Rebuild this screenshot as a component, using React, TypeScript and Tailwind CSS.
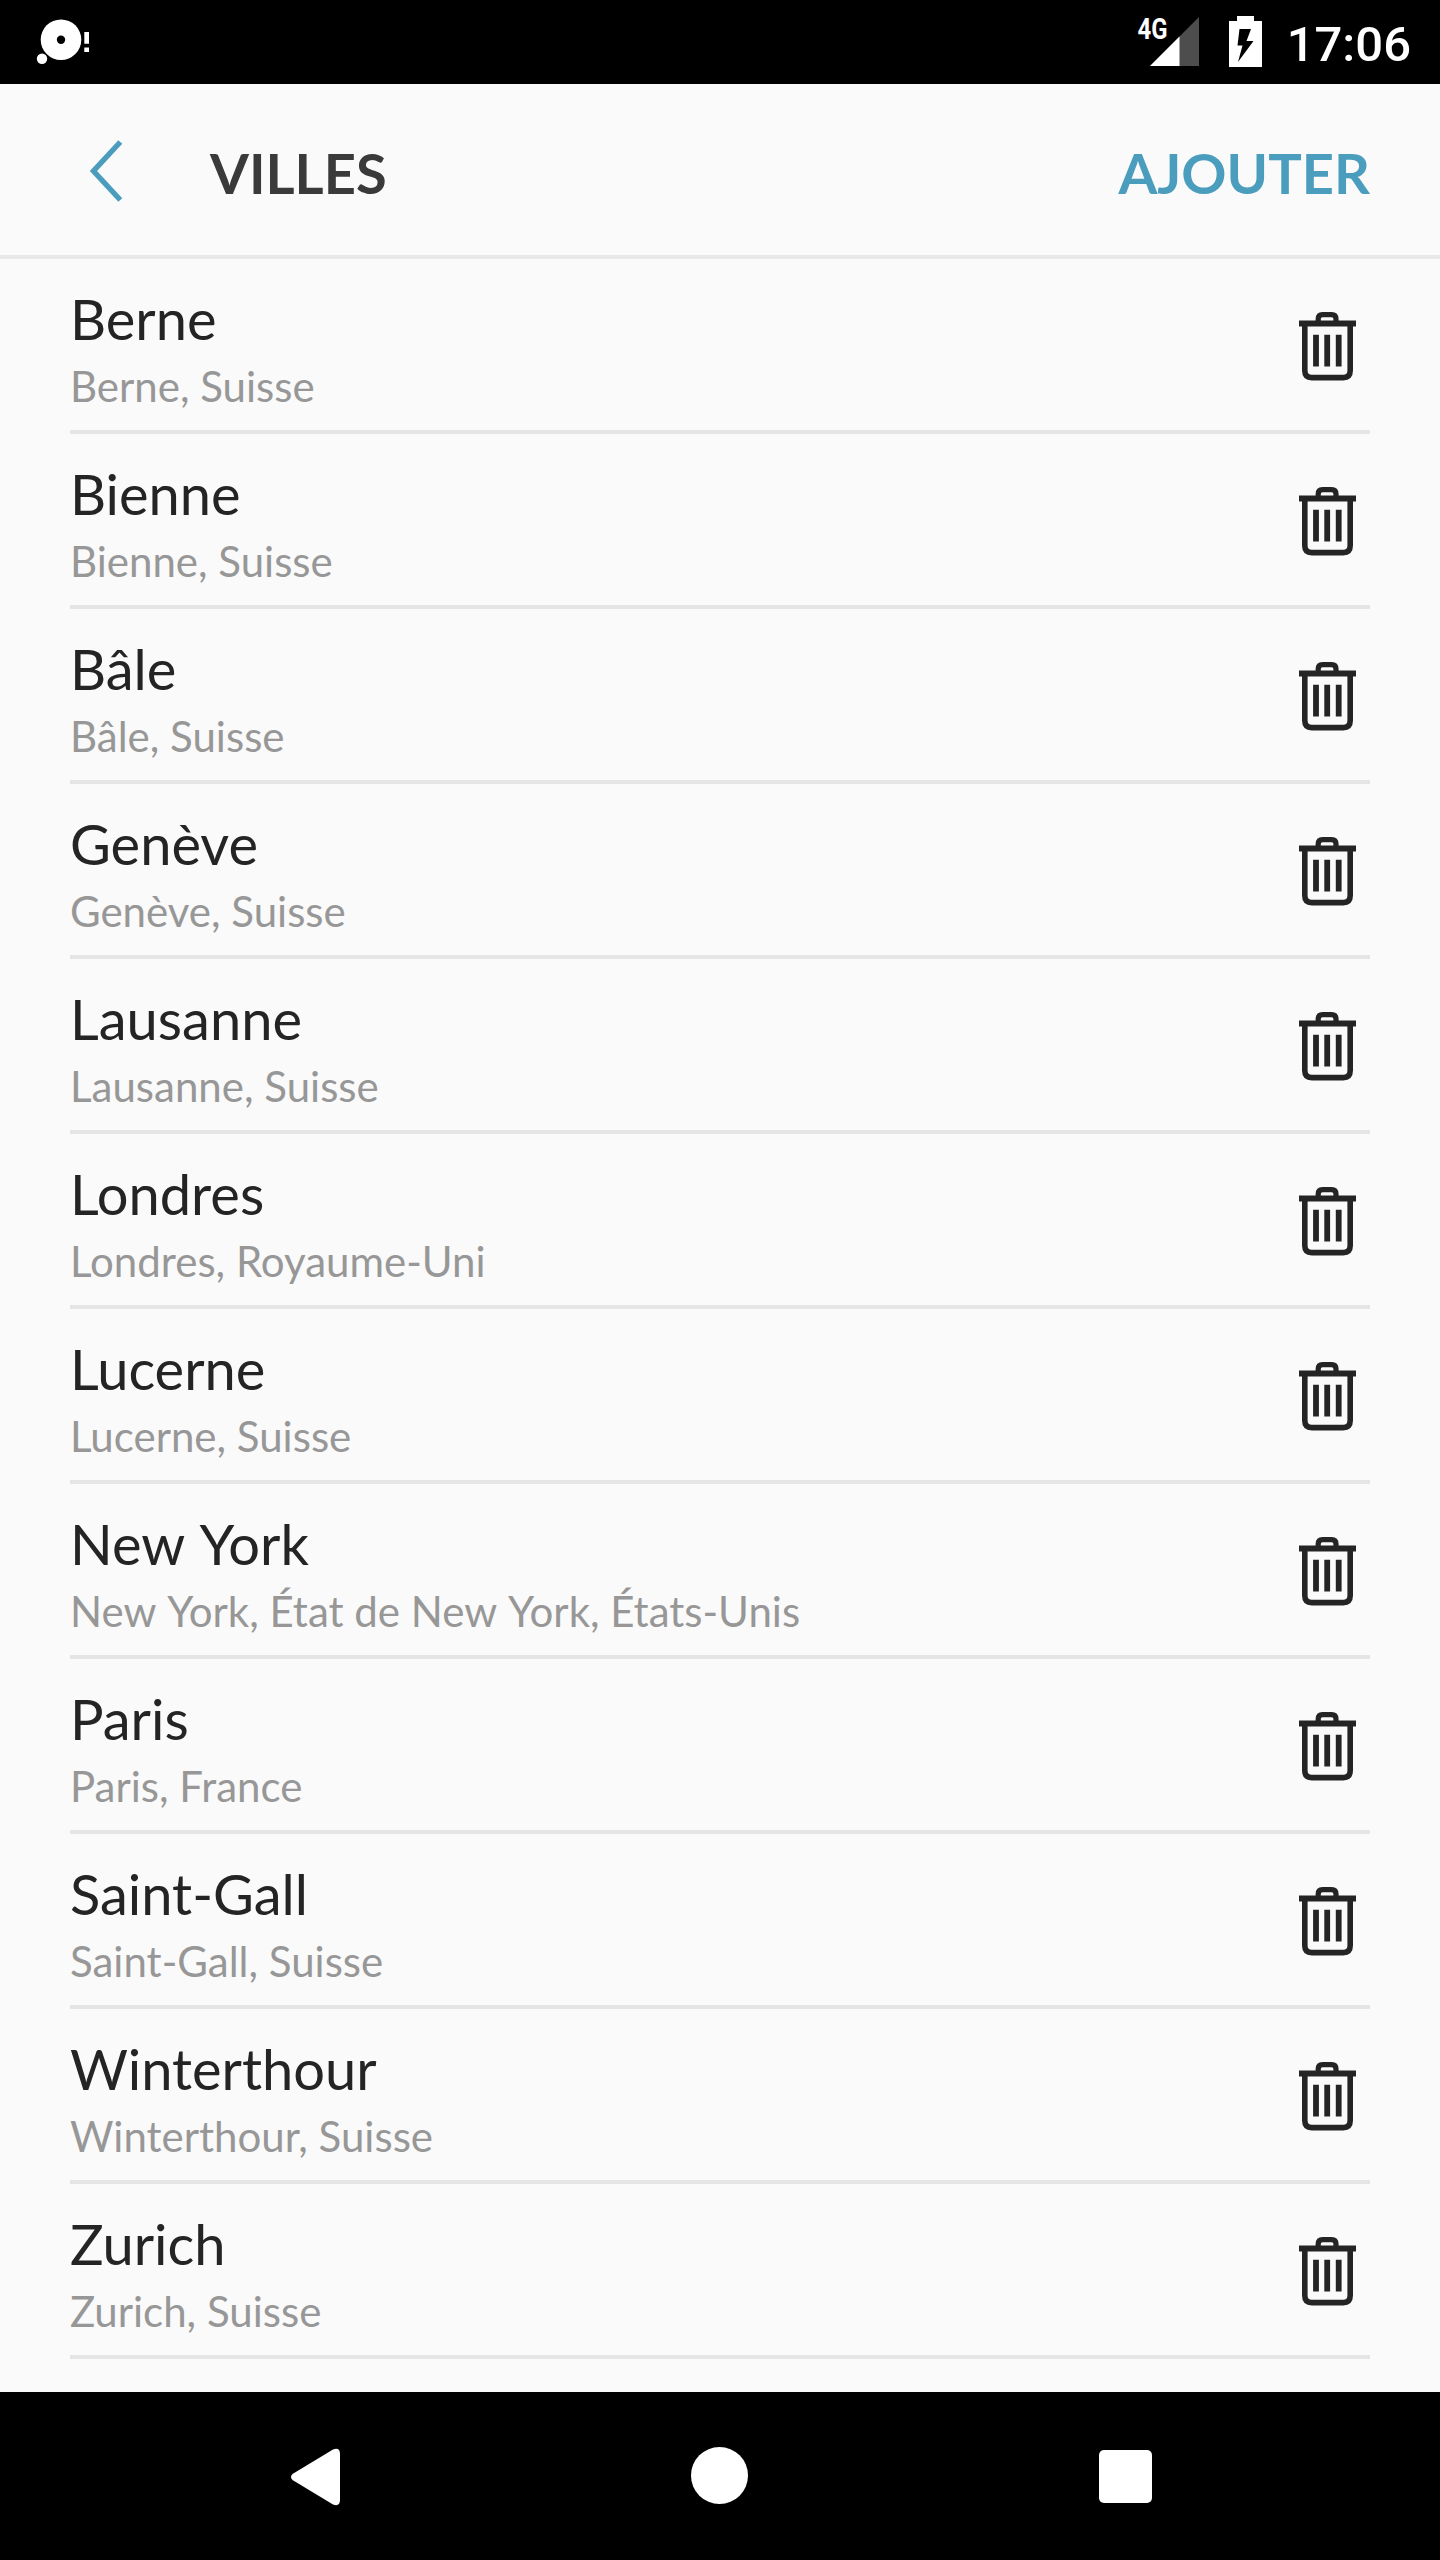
import { Fragment, useState } from 'react';

interface City {
  name: string;
  region: string;
}

const initialCities: City[] = [
  { name: 'Berne', region: 'Berne, Suisse' },
  { name: 'Bienne', region: 'Bienne, Suisse' },
  { name: 'Bâle', region: 'Bâle, Suisse' },
  { name: 'Genève', region: 'Genève, Suisse' },
  { name: 'Lausanne', region: 'Lausanne, Suisse' },
  { name: 'Londres', region: 'Londres, Royaume-Uni' },
  { name: 'Lucerne', region: 'Lucerne, Suisse' },
  { name: 'New York', region: 'New York, État de New York, États-Unis' },
  { name: 'Paris', region: 'Paris, France' },
  { name: 'Saint-Gall', region: 'Saint-Gall, Suisse' },
  { name: 'Winterthour', region: 'Winterthour, Suisse' },
  { name: 'Zurich', region: 'Zurich, Suisse' },
];

// Inline-block words, so that Lato does not kern across the spaces
function Words({ text }: { text: string }) {
  return text.split(' ').map((word, i) => (
    <Fragment key={i}>
      {i > 0 && ' '}
      <span className="inline-block">{word}</span>
    </Fragment>
  ));
}

function TrashIcon() {
  return (
    <svg className="h-[70px] w-[58px]" viewBox="0 0 58 70" fill="none" stroke="#242424">
      <path d="M19.2 10V7Q19.2 2.6 23.5 2.6H32.7Q37 2.6 37 7V10" strokeWidth={5.2} />
      <path d="M0 11.5H57" strokeWidth={5.8} />
      <path d="M5.8 12V58.5Q5.8 65.6 12.8 65.6H44.200Q51.2 65.6 51.2 58.5V12" strokeWidth={5.6} />
      <path d="M17 22.7V54.5M28.2 22.7V54.5M39.7 22.7V54.5" strokeWidth={5.8} />
    </svg>
  );
}

function StatusBar() {
  return (
    <div className="flex h-[84px] justify-between bg-black pr-[29px] pl-[36px]">
      <svg className="h-[84px] w-[56px]" viewBox="36 0 56 84" fill="#fff">
        <circle cx="61" cy="39.7" r="20.3" />
        <circle cx="61" cy="39.7" r="4.2" fill="#000" />
        <circle cx="42" cy="58.7" r="5.2" />
        <path d="M84.3 32H89V43.7H84.3ZM84.3 47.5H89V52H84.3Z" />
      </svg>

      <div className="flex">
        <svg className="h-[84px] w-[64px]" viewBox="1137 0 64 84">
          <text
            x="1137.5"
            y="38.7"
            textLength="30"
            lengthAdjust="spacingAndGlyphs"
            className="fill-white font-['Roboto',sans-serif] text-[29px] font-bold"
          >
            4G
          </text>
          <path d="M1199 17V66H1150Z" fill="#4d4d4d" />
          <path d="M1179.5 36.5V66H1150Z" fill="#fff" />
        </svg>
        <svg className="ml-[28px] h-[84px] w-[33px]" viewBox="1229 0 33 84">
          <path d="M1237 16H1254V21H1262V67H1229V21H1237Z" fill="#fff" />
          <path d="M1239.5 29H1251L1246.5 41H1253.5L1238 62L1242.5 45.5H1237.5Z" fill="#000" />
        </svg>
        <span className="ml-[25px] font-['Roboto',sans-serif] text-[49px] leading-[89px] font-medium text-white">
          17:06
        </span>
      </div>
    </div>
  );
}

function Header() {
  return (
    <header className="flex h-[175px] items-center border-b-4 border-[#e8e8e8] px-[70px]">
      <button className="-ml-3.5 flex h-full w-[154px] items-center pt-[3px] pl-[34px]" aria-label="Retour">
        <svg className="h-[62px] w-[33px]" viewBox="0 0 33 62" fill="none">
          <path d="M30.300 2L3.500 31L30.300 60" stroke="#4b9dbe" strokeWidth={5.4} />
        </svg>
      </button>
      <h1 className="mt-[5px] text-[56px] leading-[67px] font-bold text-[#3a3a3a]">VILLES</h1>
      <button className="mt-[5px] ml-auto text-[56px] leading-[67px] font-bold text-[#4b9dbe]">
        AJOUTER
      </button>
    </header>
  );
}

function CityRow({ city, onDelete }: { city: City; onDelete: () => void }) {
  return (
    <li className="flex h-[175px] items-start justify-between border-b-4 border-[#e5e5e5]">
      <div className="pt-[26px]">
        <p className="text-[56px] leading-[67px] text-[#242424]">
          <Words text={city.name} />
        </p>
        <p className="mt-[9px] text-[42px] leading-[50px] text-[#979797]">
          <Words text={city.region} />
        </p>
      </div>
      <button onClick={onDelete} className="mt-[53px] mr-[13px]" aria-label={`Supprimer ${city.name}`}>
        <TrashIcon />
      </button>
    </li>
  );
}

function NavBar() {
  return (
    <nav className="flex h-[168px] items-center bg-black pl-[290px]">
      <svg className="mt-px h-[58px] w-[52px]" viewBox="0 0 52 58" fill="#fff">
        <path d="M2.5 26L43 1.5Q50 -1 50 6V52Q50 59 43 56.5L2.5 32Q-0.500 29 2.5 26Z" />
      </svg>
      <div className="mb-px ml-[349px] h-[57px] w-[57px] rounded-full bg-white" />
      <div className="mt-px ml-[351px] h-[53px] w-[53px] rounded-[5px] bg-white" />
    </nav>
  );
}

export default function App() {
  const [cities, setCities] = useState<City[]>(initialCities);

  return (
    <div className="flex h-[2560px] w-[1440px] flex-col bg-[#fafafa] font-['Lato',sans-serif]">
      <StatusBar />
      <Header />
      <ul className="flex-1 overflow-hidden px-[70px]">
        {cities.map((city) => (
          <CityRow
            key={city.name}
            city={city}
            onDelete={() => setCities((prev) => prev.filter((c) => c.name !== city.name))}
          />
        ))}
      </ul>
      <NavBar />
    </div>
  );
}
